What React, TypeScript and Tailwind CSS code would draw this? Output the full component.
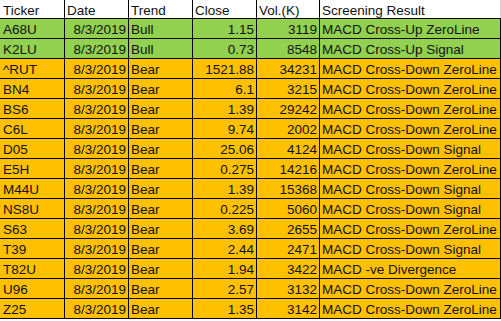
import React from "react";

type Row = [string, string, string, string, string, string, boolean];

const rows: Row[] = [
  ["A68U", "8/3/2019", "Bull", "1.15", "3119", "MACD Cross-Up ZeroLine", true],
  ["K2LU", "8/3/2019", "Bull", "0.73", "8548", "MACD Cross-Up Signal", true],
  ["^RUT", "8/3/2019", "Bear", "1521.88", "34231", "MACD Cross-Down ZeroLine", false],
  ["BN4", "8/3/2019", "Bear", "6.1", "3215", "MACD Cross-Down ZeroLine", false],
  ["BS6", "8/3/2019", "Bear", "1.39", "29242", "MACD Cross-Down ZeroLine", false],
  ["C6L", "8/3/2019", "Bear", "9.74", "2002", "MACD Cross-Down ZeroLine", false],
  ["D05", "8/3/2019", "Bear", "25.06", "4124", "MACD Cross-Down Signal", false],
  ["E5H", "8/3/2019", "Bear", "0.275", "14216", "MACD Cross-Down ZeroLine", false],
  ["M44U", "8/3/2019", "Bear", "1.39", "15368", "MACD Cross-Down Signal", false],
  ["NS8U", "8/3/2019", "Bear", "0.225", "5060", "MACD Cross-Down Signal", false],
  ["S63", "8/3/2019", "Bear", "3.69", "2655", "MACD Cross-Down ZeroLine", false],
  ["T39", "8/3/2019", "Bear", "2.44", "2471", "MACD Cross-Down Signal", false],
  ["T82U", "8/3/2019", "Bear", "1.94", "3422", "MACD -ve Divergence", false],
  ["U96", "8/3/2019", "Bear", "2.57", "3132", "MACD Cross-Down ZeroLine", false],
  ["Z25", "8/3/2019", "Bear", "1.35", "3142", "MACD Cross-Down ZeroLine", false],
];

const cols = "grid grid-cols-[65px_64px_64px_64px_63px_181px]";

export default function App() {
  return (
    <div
      className="w-[501px] h-[321px] bg-white text-[#111] text-[13.5px] leading-none whitespace-nowrap overflow-hidden"
      style={{ fontFamily: '"Liberation Sans", Arial, sans-serif' }}
    >
      <div className={`${cols} h-[19px] border-b border-black`}>
        <div className="border-r border-black flex items-end pl-[3px] pb-[1px]">Ticker</div>
        <div className="border-r border-black flex items-end pl-[2px] pb-[1px]">Date</div>
        <div className="border-r border-black flex items-end pl-[2px] pb-[1px]">Trend</div>
        <div className="border-r border-black flex items-end pl-[2px] pb-[1px]">Close</div>
        <div className="border-r border-black flex items-end pl-[2px] pb-[1px]">Vol.(K)</div>
        <div className="border-r border-[#d4d4d4] flex items-end pl-[2px] pb-[1px]">Screening Result</div>
      </div>
      {rows.map((r) => (
        <div
          key={r[0]}
          className={`${cols} h-[20px] border-b border-black ${r[6] ? "bg-[#92d050]" : "bg-[#ffc000]"}`}
        >
          <div className="border-r border-black flex items-end pl-[3px] pb-[2px]">{r[0]}</div>
          <div className="border-r border-black flex items-end justify-end pr-[2px] pb-[2px]">{r[1]}</div>
          <div className="border-r border-black flex items-end pl-[2px] pb-[2px]">{r[2]}</div>
          <div className="border-r border-black flex items-end justify-end pr-[2px] pb-[2px]">{r[3]}</div>
          <div className="border-r border-black flex items-end justify-end pr-[2px] pb-[2px]">{r[4]}</div>
          <div className="border-r border-black flex items-end pl-[2px] pb-[2px]">{r[5]}</div>
        </div>
      ))}
    </div>
  );
}
